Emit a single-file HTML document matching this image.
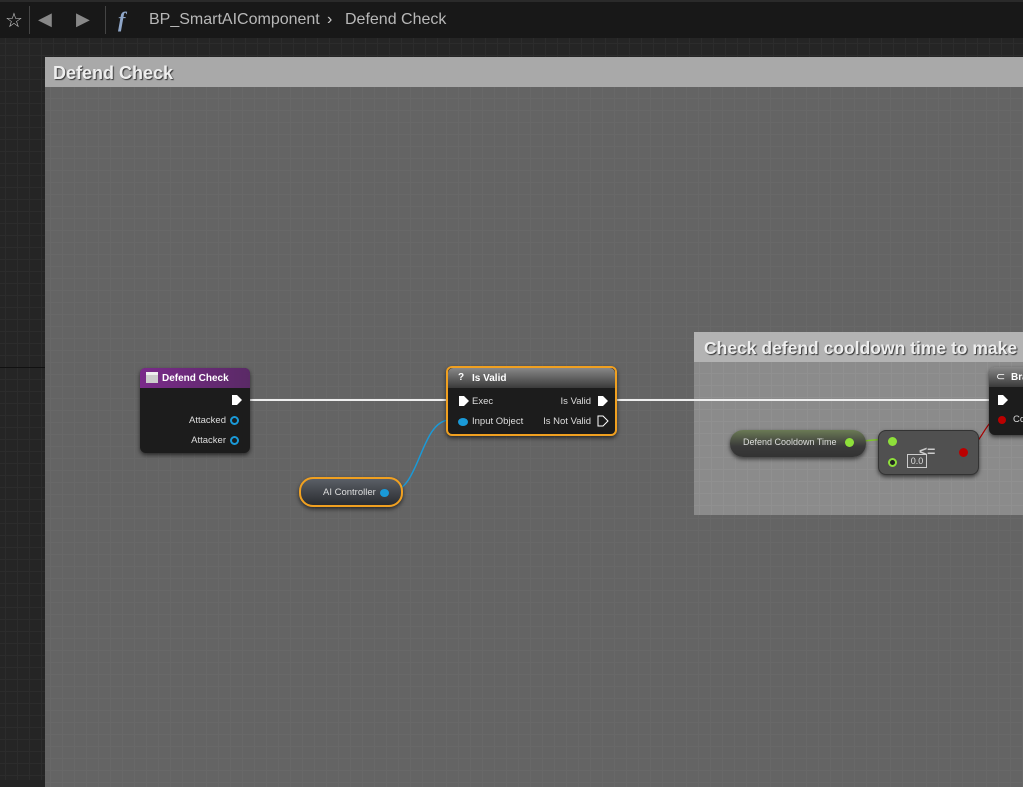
<!DOCTYPE html>
<html><head><meta charset="utf-8"><style>
*{margin:0;padding:0;box-sizing:border-box}
body{width:1023px;height:780px;overflow:hidden;background:#242424;font-family:"Liberation Sans",sans-serif;position:relative}
.canvas{position:absolute;left:0;top:38px;width:1023px;height:742px;background-color:#252525;
background-image:linear-gradient(#2c2c2c 1px,transparent 1px),linear-gradient(90deg,#2c2c2c 1px,transparent 1px);background-size:12px 12px;background-position:5px 5px}
.top{position:absolute;left:0;top:0;width:1023px;height:38px;background:#181818;border-top:2px solid #2a2a2a}
.top span{position:absolute;color:#b8b8b8;font-size:16px;top:9px}
.cm{position:absolute;background-color:#646464;background-image:linear-gradient(#686868 1px,transparent 1px),linear-gradient(90deg,#686868 1px,transparent 1px);background-size:12px 12px;background-position:5px 5px}
.cmh{position:absolute;left:0;top:0;right:0;height:30px;background:#a9a9a9;color:#eee;font-weight:bold;text-shadow:1px 1px 1px #333;padding-left:8px;line-height:32px;white-space:nowrap;overflow:hidden}
.node{position:absolute;background:#1c1c1c;border-radius:6px;box-shadow:0 2px 4px rgba(0,0,0,.6);color:#ddd;font-size:10px}
.nh{height:20px;border-radius:5px 5px 0 0;color:#fff;font-weight:bold;font-size:10px;line-height:21px;padding-left:22px;position:relative}
.t{position:absolute;font-size:9.5px;color:#ddd;white-space:nowrap}
</style></head><body>
<div class="canvas"></div>
<div style="position:absolute;left:0;top:367px;width:45px;height:1px;background:#111"></div>
<div class="top">
<span style="left:5px;top:6px;font-size:20px;color:#ccc">☆</span>
<div style="position:absolute;left:29px;top:4px;width:1px;height:28px;background:#444"></div>
<span style="left:38px;top:7px;font-size:18px;color:#888">&#9664;</span>
<span style="left:76px;top:7px;font-size:18px;color:#888">&#9654;</span>
<div style="position:absolute;left:105px;top:4px;width:1px;height:28px;background:#444"></div>
<span style="left:118px;top:5px;font-size:22px;font-style:italic;font-family:'Liberation Serif',serif;color:#8fa6c8;font-weight:bold">f</span>
<span style="left:149px">BP_SmartAIComponent</span>
<span style="left:327px;color:#ccc">›</span>
<span style="left:345px">Defend Check</span>
</div>
<div class="cm" style="left:45px;top:57px;width:990px;height:730px"><div class="cmh" style="font-size:18px">Defend Check</div></div>
<div class="cm" style="left:694px;top:332px;width:340px;height:183px;background-color:#8b8b8b;background-image:linear-gradient(#909090 1px,transparent 1px),linear-gradient(90deg,#909090 1px,transparent 1px)"><div class="cmh" style="background:#b3b3b3;font-size:17.5px;padding-left:10px">Check defend cooldown time to make</div></div>
<svg style="position:absolute;left:0;top:0" width="1023" height="780">
<line x1="243" y1="400" x2="452" y2="400" stroke="#eee" stroke-width="2"/>
<line x1="610" y1="400" x2="995" y2="400" stroke="#eee" stroke-width="2"/>
<path d="M390 492 C420 492,420 420,450 420" stroke="#1a9ad8" stroke-width="1.5" fill="none"/>
<path d="M852 442 L885 439" stroke="#7ec42a" stroke-width="1.5"/>
<path d="M962 452 C980 450,985 420,996 420" stroke="#a00" stroke-width="1.2" fill="none"/>
</svg>
<div class="node" style="left:140px;top:368px;width:110px;height:85px">
<div class="nh" style="background:linear-gradient(90deg,#7a2a8a,#5a2a66)">Defend Check</div>
<div style="position:absolute;left:6px;top:4px;width:12px;height:11px;background:#ccc;border-top:3px solid #eee"></div>
<svg style="position:absolute;left:91px;top:26px" width="12" height="12"><path d="M1 1H6L11 6L6 11H1Z" fill="#fff"/></svg>
<div class="t" style="right:24px;top:47px">Attacked</div><div style="position:absolute;left:90px;top:48px;width:9px;height:9px;border:2px solid #1a9ad8;border-radius:50%"></div>
<div class="t" style="right:24px;top:67px">Attacker</div><div style="position:absolute;left:90px;top:68px;width:9px;height:9px;border:2px solid #1a9ad8;border-radius:50%"></div>
</div>
<div class="node" style="left:446px;top:366px;width:171px;height:70px;border:2px solid #f0a020">
<div class="nh" style="background:linear-gradient(#888,#3a3a3a);padding-left:24px">Is Valid</div>
<div style="position:absolute;left:10px;top:4px;color:#fff;font-weight:bold;font-size:10px">?</div>
<svg style="position:absolute;left:10px;top:27px" width="12" height="12"><path d="M1 1H6L11 6L6 11H1Z" fill="#fff"/></svg>
<div class="t" style="left:24px;top:28px">Exec</div>
<div class="t" style="right:24px;top:28px">Is Valid</div>
<svg style="position:absolute;left:149px;top:27px" width="12" height="12"><path d="M1 1H6L11 6L6 11H1Z" fill="#fff"/></svg>
<div style="position:absolute;left:10px;top:50px;width:10px;height:8px;background:#1a9ad8;border-radius:50%"></div>
<div class="t" style="left:24px;top:48px">Input Object</div>
<div class="t" style="right:24px;top:48px">Is Not Valid</div>
<svg style="position:absolute;left:149px;top:47px" width="12" height="12"><path d="M1 1H6L11 6L6 11H1Z" fill="none" stroke="#fff"/></svg>
</div>
<div class="node" style="left:299px;top:477px;width:104px;height:30px;border:2px solid #f0a020;border-radius:14px;background:linear-gradient(#5a5f66,#2a2c30)">
<div class="t" style="left:22px;top:8px">AI Controller</div>
<div style="position:absolute;left:79px;top:10px;width:9px;height:8px;background:#1a9ad8;border-radius:50%"></div>
</div>
<div class="node" style="left:730px;top:430px;width:136px;height:27px;border-radius:13px;background:linear-gradient(#6a7a55,#3a3a3a 60%,#333)">
<div class="t" style="left:13px;top:7px;font-size:9px">Defend Cooldown Time</div>
<div style="position:absolute;left:115px;top:8px;width:9px;height:9px;background:#8ee03a;border-radius:50%"></div>
</div>
<div class="node" style="left:878px;top:430px;width:101px;height:45px;background:#505050;border:1px solid #333;border-radius:8px">
<div style="position:absolute;left:9px;top:6px;width:9px;height:9px;background:#8ee03a;border-radius:50%"></div>
<div style="position:absolute;left:9px;top:27px;width:9px;height:9px;border:2px solid #8ee03a;border-radius:50%;background:#222"></div>
<div style="position:absolute;left:28px;top:23px;width:20px;height:14px;border:1px solid #ccc;color:#ddd;font-size:9px;text-align:center;line-height:12px">0.0</div>
<div style="position:absolute;left:40px;top:12px;color:#ccc;font-size:14px;font-weight:bold">&lt;=</div>
<div style="position:absolute;left:80px;top:17px;width:9px;height:9px;background:#b00;border-radius:50%"></div>
</div>
<div class="node" style="left:989px;top:367px;width:50px;height:68px">
<div class="nh" style="background:linear-gradient(#888,#3a3a3a);padding-left:22px">Branch</div>
<div style="position:absolute;left:7px;top:3px;color:#fff;font-size:11px">⊂</div>
<svg style="position:absolute;left:8px;top:27px" width="12" height="12"><path d="M1 1H6L11 6L6 11H1Z" fill="#fff"/></svg>
<div style="position:absolute;left:9px;top:49px;width:8px;height:8px;background:#b00;border-radius:50%"></div>
<div class="t" style="left:24px;top:47px">Condition</div>
</div>
</body></html>
